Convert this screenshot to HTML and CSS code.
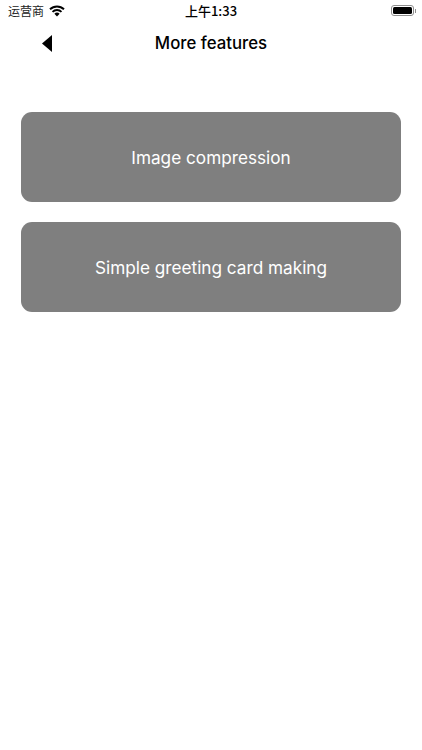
FILE: index.html
```html
<!DOCTYPE html>
<html lang="en">
<head>
    <meta charset="UTF-8">
    <meta name="viewport" content="width=device-width, initial-scale=1.0">
    <title>More features</title>
    <link rel="stylesheet" href="styles.css">
</head>
<body>
    <div class="status-bar">
        <div class="status-left">
            <span class="carrier">运营商</span>
            <svg class="wifi" width="16" height="12" viewBox="0 0 16 12">
                <path d="M8 11.5 5.4 8.8a3.7 3.7 0 0 1 5.2 0z" fill="#000"/>
                <path d="M3.5 6.9a6.4 6.4 0 0 1 9 0" fill="none" stroke="#000" stroke-width="1.9"/>
                <path d="M1 4.3a10 10 0 0 1 14 0" fill="none" stroke="#000" stroke-width="1.9"/>
            </svg>
        </div>
        <span class="clock">上午1:33</span>
        <div class="battery">
            <div class="battery-body"><div class="battery-fill"></div></div>
            <div class="battery-cap"></div>
        </div>
    </div>

    <div class="nav-bar">
        <svg class="back" width="10" height="17" viewBox="0 0 10 17">
            <polygon points="10,0 10,17 0,8.5" fill="#000"/>
        </svg>
        <h1>More features</h1>
    </div>

    <div class="feature-list">
        <div class="feature-btn">Image compression</div>
        <div class="feature-btn">Simple greeting card making</div>
    </div>
</body>
</html>
```

FILE: styles.css
```css
* {
    margin: 0;
    padding: 0;
    box-sizing: border-box;
}

body {
    font-family: Inter, "Liberation Sans", "Noto Sans CJK SC", sans-serif;
    background: #fff;
    color: #000;
    min-height: 100vh;
}

.status-bar {
    position: relative;
    height: 21px;
    display: flex;
    justify-content: space-between;
    align-items: center;
    padding: 0 6px 0 8px;
}

.status-left {
    display: flex;
    align-items: center;
    gap: 5px;
}

.carrier {
    font-family: "Noto Sans CJK SC", sans-serif;
    font-size: 12px;
    color: #222;
}

.wifi {
    display: block;
    margin-top: 1px;
}

.clock {
    position: absolute;
    left: 0;
    right: 0;
    text-align: center;
    font-family: "Noto Sans CJK SC", sans-serif;
    font-size: 13px;
    font-weight: 500;
}

.battery {
    display: flex;
    align-items: center;
    gap: 1px;
}

.battery-body {
    width: 23px;
    height: 11px;
    border: 1px solid #8e8e8e;
    border-radius: 3px;
    padding: 1px;
}

.battery-fill {
    height: 100%;
    background: #000;
    border-radius: 1.5px;
}

.battery-cap {
    width: 1px;
    height: 4px;
    background: #8e8e8e;
}

.nav-bar {
    position: relative;
    height: 44px;
    display: flex;
    align-items: center;
    justify-content: center;
}

.back {
    position: absolute;
    left: 42px;
    top: 14px;
}

h1 {
    font-size: 16.8px;
    font-weight: 500;
}

.feature-list {
    padding: 47px 21px 0;
    display: flex;
    flex-direction: column;
    gap: 20px;
}

.feature-btn {
    height: 90px;
    background: #7f7f7f;
    border-radius: 11px;
    color: #fff;
    font-size: 17.2px;
    font-weight: 400;
    display: flex;
    align-items: center;
    justify-content: center;
}
```
